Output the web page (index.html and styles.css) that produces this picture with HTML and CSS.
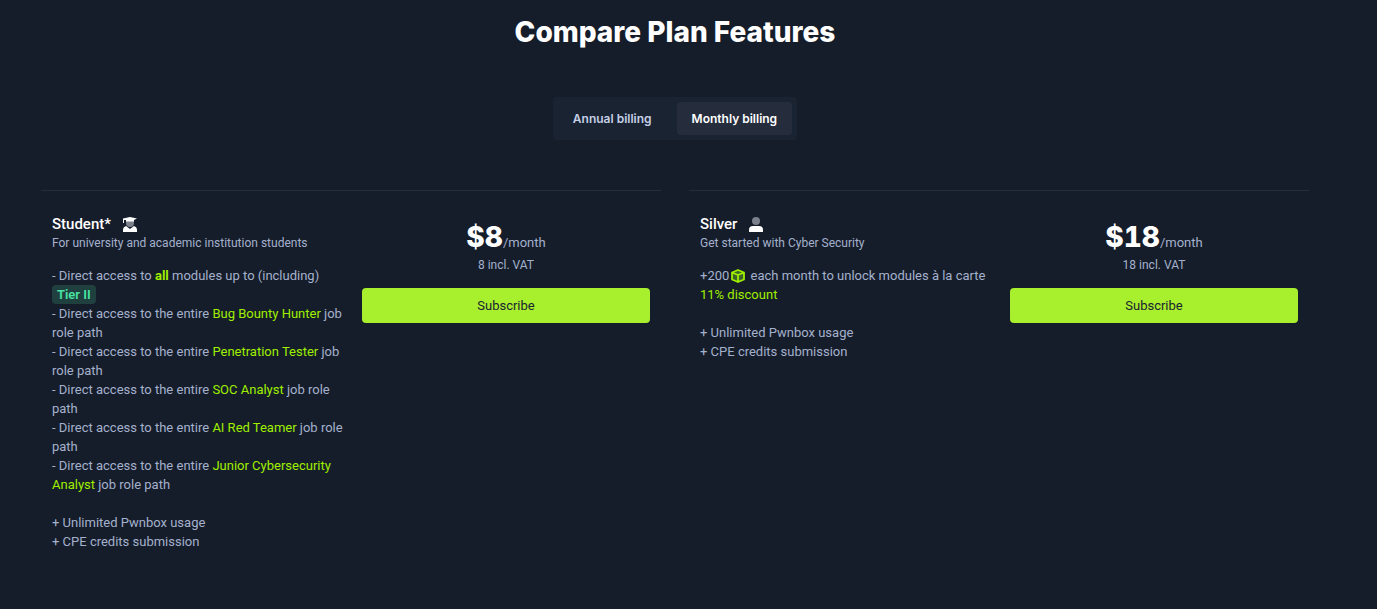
FILE: index.html
```html
<!DOCTYPE html>
<html lang="en">
<head>
  <meta charset="UTF-8" />
  <meta name="viewport" content="width=device-width, initial-scale=1.0"/>
  <title>Compare Plan Features</title>
  <link rel="stylesheet" href="styles.css">
</head>
<body>

  <main class="plans-page">
    <h1>Compare Plan Features</h1>

    <div class="billing-toggle">
      <button type="button" class="billing-option">Annual billing</button>
      <button type="button" class="billing-option active">Monthly billing</button>
    </div>

    <div class="plans">
      <section class="plan">
        <div class="plan-info">
          <div class="plan-title">
            <h2>Student*</h2>
            <svg class="plan-icon" viewBox="0 0 14 15" aria-hidden="true">
              <path d="M3 3h8v3a4 4 0 0 1-8 0z" fill="#7b808b"/>
              <path d="M0 1.5L7 0l7 1.5L11 3v1.5H3V3H1v3H0z" fill="#fff"/>
              <path d="M0 15v-2q0-3 3-4l4 3 4-3q3 1 3 4v2z" fill="#fff"/>
            </svg>
          </div>
          <p class="plan-subtitle">For university and academic institution students</p>
          <ul class="features">
            <li>- Direct access to <b>all</b> modules up to (including) <span class="tier">Tier II</span></li>
            <li>- Direct access to the entire <a href="#">Bug Bounty Hunter</a> job role path</li>
            <li>- Direct access to the entire <a href="#">Penetration Tester</a> job role path</li>
            <li>- Direct access to the entire <a href="#">SOC Analyst</a> job role path</li>
            <li>- Direct access to the entire <a href="#">AI Red Teamer</a> job role path</li>
            <li>- Direct access to the entire <a href="#">Junior Cybersecurity Analyst</a> job role path</li>
          </ul>
          <ul class="features">
            <li>+ Unlimited Pwnbox usage</li>
            <li>+ CPE credits submission</li>
          </ul>
        </div>
        <div class="plan-price">
          <p class="price"><strong>$8</strong>/month</p>
          <p class="vat">8 incl. VAT</p>
          <button type="button" class="subscribe">Subscribe</button>
        </div>
      </section>

      <section class="plan">
        <div class="plan-info">
          <div class="plan-title">
            <h2>Silver</h2>
            <svg class="plan-icon" viewBox="0 0 14 15" aria-hidden="true">
              <circle cx="7" cy="4" r="4" fill="#7b808b"/>
              <path d="M0 15v-2q0-4 4-4h6q4 0 4 4v2z" fill="#fff"/>
            </svg>
          </div>
          <p class="plan-subtitle">Get started with Cyber Security</p>
          <ul class="features">
            <li>+200<svg class="cube" viewBox="0 0 14 14" aria-hidden="true">
              <path d="M7 1l6 2.5v7L7 13l-6-2.5v-7z" fill="#3d6427"/>
              <path d="M7 1l6 2.5v7L7 13l-6-2.5v-7zM1 3.5L7 6l6-2.5M7 6v7" fill="none" stroke="#9fef00" stroke-width="1.8" stroke-linejoin="round"/>
            </svg> each month to unlock modules à la carte</li>
            <li class="discount">11% discount</li>
          </ul>
          <ul class="features">
            <li>+ Unlimited Pwnbox usage</li>
            <li>+ CPE credits submission</li>
          </ul>
        </div>
        <div class="plan-price">
          <p class="price"><strong>$18</strong>/month</p>
          <p class="vat">18 incl. VAT</p>
          <button type="button" class="subscribe">Subscribe</button>
        </div>
      </section>
    </div>
  </main>

</body>
</html>
```
FILE: styles.css
```css
* {
  margin: 0;
  padding: 0;
  box-sizing: border-box;
}

body {
  min-height: 100vh;
  background: #161d2a;
  color: #a4b1cd;
  font-family: Roboto, 'Liberation Sans', Arial, sans-serif;
  font-size: 13px;
  line-height: 19px;
}

button {
  border: 0;
  border-radius: 4px;
  font: inherit;
  cursor: pointer;
}

.plans-page {
  display: flex;
  flex-direction: column;
  align-items: center;
  padding: 14px 68px 40px 41px;
}

h1 {
  color: #fff;
  font-family: Inter, 'Liberation Sans', Arial, sans-serif;
  font-size: 28px;
  font-weight: 800;
  line-height: 36px;
}

.billing-toggle {
  display: flex;
  gap: 10px;
  margin: 47px 0 50px;
  padding: 5px;
  background: #1a2332;
  border-radius: 4px;
}

.billing-option {
  height: 33px;
  padding: 0 15px;
  background: transparent;
  color: #c5cfe6;
  font-family: Inter, 'Liberation Sans', Arial, sans-serif;
  font-size: 12px;
  font-weight: 600;
}

.billing-option.active {
  background: #252d3d;
  color: #fff;
}

.plans {
  display: grid;
  grid-template-columns: 1fr 1fr;
  gap: 28px;
  width: 100%;
}

.plan {
  display: grid;
  grid-template-columns: 296fr 288fr;
  gap: 14px;
  padding: 24px 11px;
  border-top: 1px solid #232d3b;
}

.plan-title {
  display: flex;
  align-items: center;
  gap: 12px;
}

h2 {
  color: #fff;
  font-size: 15px;
  font-weight: 500;
  line-height: 19px;
}

.plan-icon {
  width: 14px;
  height: 15px;
}

.plan-subtitle {
  margin-bottom: 13px;
  font-size: 12px;
}

.features {
  margin-bottom: 19px;
  list-style: none;
}

.features a,
.features b,
.discount {
  color: #9fef00;
  text-decoration: none;
}

.tier {
  display: inline-block;
  padding: 0 5px;
  border-radius: 4px;
  background: #20403f;
  color: #46e3a5;
  font-weight: 600;
}

.cube {
  width: 14px;
  height: 14px;
  margin: 0 2px;
  vertical-align: -3px;
}

.plan-price {
  display: flex;
  flex-direction: column;
  padding-top: 9px;
  text-align: center;
}

.price {
  line-height: 26px;
}

.price strong {
  color: #fff;
  font-family: Inter, 'Liberation Sans', Arial, sans-serif;
  font-size: 28px;
  font-weight: 800;
  font-variant-numeric: tabular-nums;
}

.vat {
  font-size: 12px;
}

.subscribe {
  height: 35px;
  margin-top: 13px;
  background: #a8ef2d;
  color: #1a2332;
}

@media (max-width: 900px) {
  .plans-page {
    padding: 14px 20px 40px;
  }

  .plans {
    grid-template-columns: 1fr;
  }
}
```
